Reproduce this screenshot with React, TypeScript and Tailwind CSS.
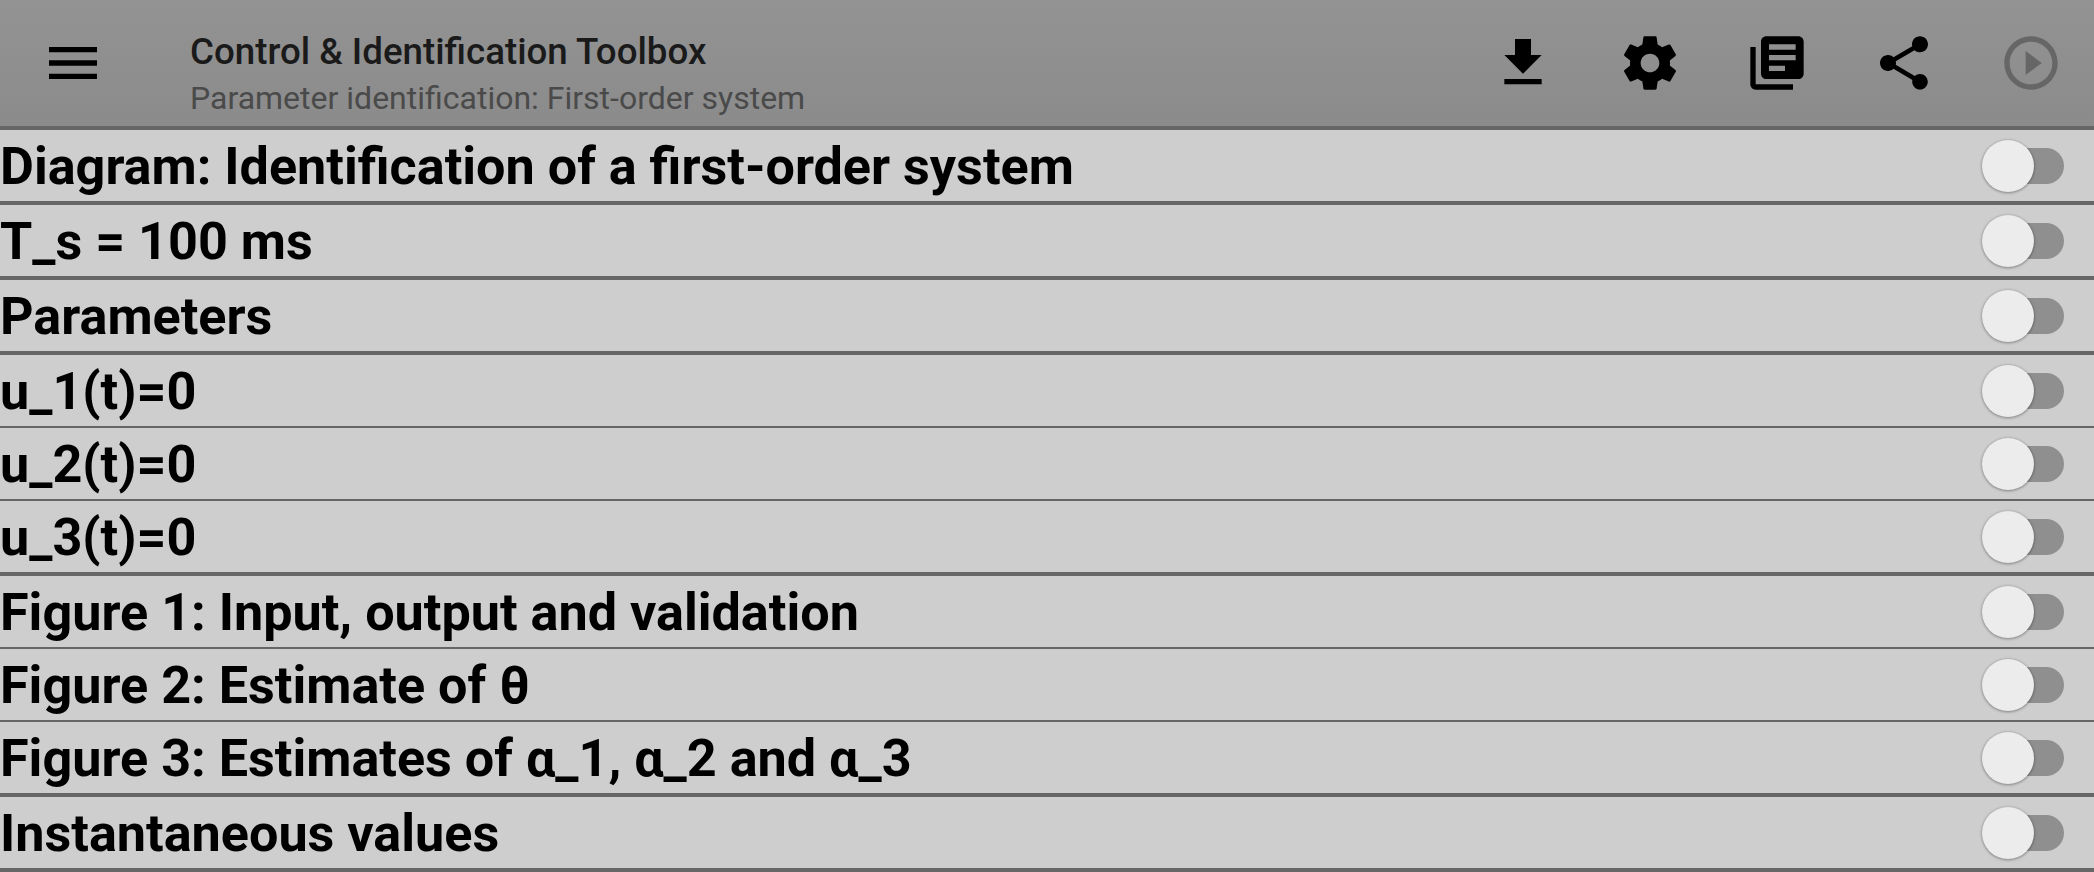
// App.tsx - Control & Identification Toolbox, block list
import React from 'react';

const ICONS = {
  menu: 'M3 18h18v-2H3v2zm0-5h18v-2H3v2zm0-7v2h18V6H3z',
  download: 'M19 9h-4V3H9v6H5l7 7 7-7zM5 18v2h14v-2H5z',
  settings:
    'M19.43 12.98c.04-.32.07-.64.07-.98s-.03-.66-.07-.98l2.11-1.65c.19-.15.24-.42.12-.64l-2-3.46c-.12-.22-.39-.3-.61-.22l-2.49 1c-.52-.4-1.08-.73-1.69-.98l-.38-2.65C14.46 2.18 14.25 2 14 2h-4c-.25 0-.46.18-.49.42l-.38 2.65c-.61.25-1.17.59-1.69.98l-2.49-1c-.23-.09-.49 0-.61.22l-2 3.46c-.13.22-.07.49.12.64l2.11 1.65c-.04.32-.07.65-.07.98s.03.66.07.98l-2.11 1.65c-.19.15-.24.42-.12.64l2 3.46c.12.22.39.3.61.22l2.49-1c.52.4 1.08.73 1.69.98l.38 2.65c.03.24.24.42.49.42h4c.25 0 .46-.18.49-.42l.38-2.65c.61-.25 1.17-.59 1.69-.98l2.49 1c.23.09.49 0 .61-.22l2-3.46c.12-.22.07-.49-.12-.64l-2.11-1.65zM12 15.5c-1.93 0-3.5-1.57-3.5-3.5s1.57-3.5 3.5-3.5 3.5 1.57 3.5 3.5-1.57 3.5-3.5 3.5z',
  books:
    'M4 6H2v14c0 1.1.9 2 2 2h14v-2H4V6zm16-4H8c-1.1 0-2 .9-2 2v12c0 1.1.9 2 2 2h12c1.1 0 2-.9 2-2V4c0-1.1-.9-2-2-2zm-1 9H9V9h10v2zm-4 4H9v-2h6v2zm4-8H9V5h10v2z',
  share:
    'M18 16.08c-.76 0-1.44.3-1.96.77L8.91 12.7c.05-.23.09-.46.09-.7s-.04-.47-.09-.7l7.05-4.11c.54.5 1.25.81 2.04.81 1.66 0 3-1.34 3-3s-1.34-3-3-3-3 1.34-3 3c0 .24.04.47.09.7L8.04 9.81C7.5 9.31 6.79 9 6 9c-1.66 0-3 1.34-3 3s1.34 3 3 3c.79 0 1.5-.31 2.04-.81l7.12 4.16c-.05.21-.08.43-.08.65 0 1.61 1.31 2.92 2.92 2.92 1.61 0 2.92-1.31 2.92-2.92s-1.31-2.92-2.92-2.92z',
  play:
    'M10 16.5l6-4.5-6-4.5v9zM12 2C6.48 2 2 6.48 2 12s4.48 10 10 10 10-4.48 10-10S17.52 2 12 2zm0 18c-4.41 0-8-3.59-8-8s3.59-8 8-8 8 3.59 8 8-3.59 8-8 8z',
};

const ROWS = [
  { label: 'Diagram: Identification of a first-order system', thick: true },
  { label: 'T_s = 100 ms', thick: true },
  { label: 'Parameters', thick: true },
  { label: 'u_1(t)=0', thick: false },
  { label: 'u_2(t)=0', thick: false },
  { label: 'u_3(t)=0', thick: true },
  { label: 'Figure 1: Input, output and validation', thick: false },
  { label: 'Figure 2: Estimate of θ', thick: false },
  { label: 'Figure 3: Estimates of α_1, α_2 and α_3', thick: true },
  { label: 'Instantaneous values', thick: true },
];

const Icon: React.FC<{ d: string; className?: string }> = ({ d, className }) => (
  <svg viewBox="0 0 24 24" className={`w-16 h-16 fill-current ${className ?? ''}`}>
    <path d={d} />
  </svg>
);

const ToolButton: React.FC<{ d: string; muted?: boolean }> = ({ d, muted }) => (
  <button className={`w-[127px] h-full flex items-center justify-center ${muted ? 'text-[#666666]' : 'text-black'}`}>
    <Icon d={d} />
  </button>
);

/* Switch apagado: el pulgar se dibuja sobre la pista */
const Toggle: React.FC = () => (
  <div className="relative w-[82px] h-[52px] flex items-center justify-end">
    <div className="w-[70px] h-9 rounded-full bg-[#8f8f8f]" />
    <div className="absolute left-0 top-0 w-[52px] h-[52px] rounded-full bg-[#ececec] shadow-[0_1px_3px_rgba(0,0,0,0.3),0_0_3px_rgba(0,0,0,0.18)]" />
  </div>
);

export default function App() {
  return (
    <div className="w-[2094px] h-[872px] overflow-hidden bg-[#cecece] font-['Roboto',sans-serif]">
      {/* Header */}
      <header className="flex items-center h-[130px] border-b-4 border-[#666666] bg-gradient-to-b from-[#939393] to-[#8b8b8b]">
        <button className="w-[146px] h-full flex items-center justify-center text-black">
          <Icon d={ICONS.menu} />
        </button>
        <div className="ml-[44px] flex-1 flex flex-col self-start pt-[28px]">
          <div className="text-[36.7px] leading-[47px] font-medium text-[#1a1a1a]">Control &amp; Identification Toolbox</div>
          <div className="text-[32px] leading-[47px] text-[#4a4a4a]">Parameter identification: First-order system</div>
        </div>
        <div className="flex h-full">
          <ToolButton d={ICONS.download} />
          <ToolButton d={ICONS.settings} />
          <ToolButton d={ICONS.books} />
          <ToolButton d={ICONS.share} />
          <ToolButton d={ICONS.play} muted />
        </div>
      </header>

      {/* Rows */}
      {ROWS.map((row) => (
        <div
          key={row.label}
          className={`flex items-center justify-between h-[71px] box-content pr-[30px] border-[#666666] ${row.thick ? 'border-b-4' : 'border-b-2'}`}
        >
          <span className="mt-[3px] text-[52.15px] font-bold text-black whitespace-nowrap">{row.label}</span>
          <Toggle />
        </div>
      ))}
    </div>
  );
}
